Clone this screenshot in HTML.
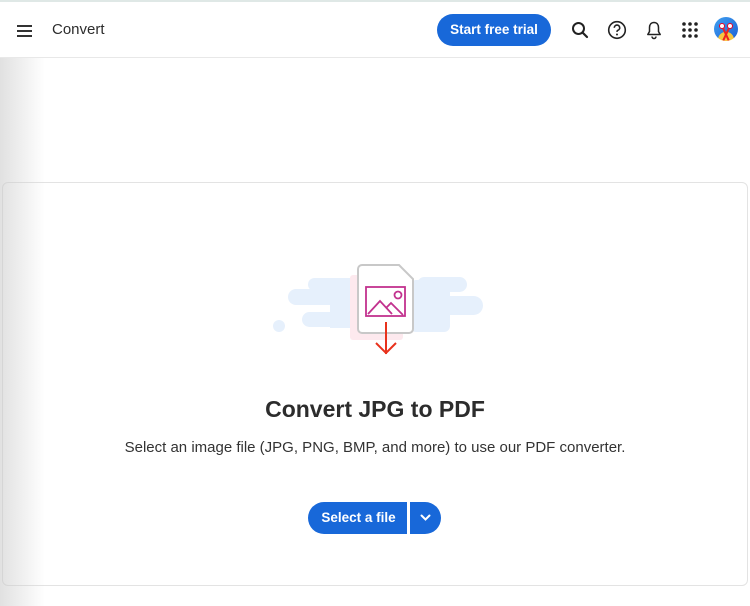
<!DOCTYPE html>
<html><head><meta charset="utf-8">
<style>
*{margin:0;padding:0;box-sizing:border-box}
body{width:750px;height:606px;overflow:hidden;background:#fff;font-family:"Liberation Sans",sans-serif;position:relative;color:#2c2c2c}
.shade{position:absolute;left:0;top:58px;width:45px;height:548px;background:linear-gradient(90deg,rgba(200,200,200,.55),rgba(255,255,255,0));z-index:5;pointer-events:none}
.top{position:absolute;left:0;top:0;width:750px;height:2px;background:#dfe8e6}
header{position:absolute;left:0;top:2px;width:750px;height:56px;border-bottom:1px solid #e8e8e8;background:#fff}
.ham{position:absolute;left:17px;top:23px;width:15px}
.ham i{display:block;height:2px;background:#333;margin-bottom:3px}
.title{position:absolute;left:52px;top:19px;font-size:15px;color:#2c2c2c}
.trial{position:absolute;left:437px;top:12px;width:114px;height:32px;border-radius:16px;background:#1868d9;color:#fff;font-weight:bold;font-size:13.5px;text-align:center;line-height:32px}
.card{position:absolute;left:2px;top:182px;width:746px;height:404px;border:1px solid #e3e3e3;border-radius:6px;background:#fff}
h1{position:absolute;left:0;width:750px;top:396px;text-align:center;font-size:23px;font-weight:bold;color:#2c2c2c}
p{position:absolute;left:0;width:750px;top:439px;text-align:center;font-size:15px;color:#333}
.btn{position:absolute;left:308px;top:502px;width:99px;height:32px;background:#1868d9;border-radius:16px 0 0 16px;color:#fff;font-weight:bold;font-size:13.5px;line-height:32px;text-align:center;padding-left:2px}
.dd{position:absolute;left:410px;top:502px;width:31px;height:32px;background:#1868d9;border-radius:0 16px 16px 0}
</style></head><body>
<div class="shade"></div><div class="top"></div>
<header>
<div class="ham"><i></i><i></i><i></i></div>
<div class="title">Convert</div>
<div class="trial">Start free trial</div>
<svg style="position:absolute;left:571px;top:19px" width="18" height="18" viewBox="0 0 18 18"><circle cx="7.5" cy="7.5" r="5.5" fill="none" stroke="#222" stroke-width="2"/><path d="M11.5 11.5L16 16" stroke="#222" stroke-width="2.2" stroke-linecap="round"/></svg>
<svg style="position:absolute;left:607px;top:18px" width="20" height="20" viewBox="0 0 20 20"><circle cx="10" cy="10" r="8.3" fill="none" stroke="#222" stroke-width="1.6"/><path d="M7.3 7.8a2.7 2.7 0 1 1 3.6 2.5c-.7.3-.9.8-.9 1.6" fill="none" stroke="#222" stroke-width="1.6"/><circle cx="10" cy="14.5" r="1" fill="#222"/></svg>
<svg style="position:absolute;left:645px;top:18px" width="18" height="20" viewBox="0 0 18 20"><path d="M9 2.5c-3 0-4.5 2.3-4.5 5v4L2.8 14.5h12.4L13.5 11.5v-4c0-2.7-1.5-5-4.5-5z" fill="none" stroke="#222" stroke-width="1.5" stroke-linejoin="round"/><path d="M7 16.5a2 2 0 0 0 4 0" fill="none" stroke="#222" stroke-width="1.5"/></svg>
<svg style="position:absolute;left:682px;top:20px" width="16" height="16" viewBox="0 0 16 16" fill="#222"><circle cx="2" cy="2" r="1.8"/><circle cx="8" cy="2" r="1.8"/><circle cx="14" cy="2" r="1.8"/><circle cx="2" cy="8" r="1.8"/><circle cx="8" cy="8" r="1.8"/><circle cx="14" cy="8" r="1.8"/><circle cx="2" cy="14" r="1.8"/><circle cx="8" cy="14" r="1.8"/><circle cx="14" cy="14" r="1.8"/></svg>
<div style="position:absolute;left:714px;top:15px;width:24px;height:24px;border-radius:50%;background:radial-gradient(circle at 50% 95%,#f7c640 30%,transparent 32%),linear-gradient(135deg,#3fa0f0,#1c5fd6);overflow:hidden">
<div style="position:absolute;left:5px;top:6px;width:6px;height:6px;border-radius:50%;background:#fff;border:1.5px solid #e02"></div>
<div style="position:absolute;left:13px;top:6px;width:6px;height:6px;border-radius:50%;background:#fff;border:1.5px solid #e02"></div>
<div style="position:absolute;left:11px;top:11px;width:2px;height:13px;background:#e22;transform:rotate(25deg)"></div>
<div style="position:absolute;left:11px;top:11px;width:2px;height:13px;background:#e22;transform:rotate(-25deg)"></div>
</div>
</header>
<div class="card"></div>
<svg style="position:absolute;left:260px;top:250px" width="240" height="110" viewBox="0 0 240 110">
<g fill="#e6f0fc">
<rect x="48" y="28" width="60" height="13" rx="6.5"/>
<rect x="28" y="39" width="80" height="16" rx="8"/>
<rect x="42" y="62" width="66" height="15" rx="7.5"/>
<rect x="70" y="38" width="38" height="40"/>
<rect x="13" y="70" width="12" height="12" rx="6"/>
<rect x="157" y="27" width="50" height="15" rx="7.5"/>
<rect x="170" y="46" width="53" height="19" rx="9.5"/>
<rect x="150" y="30" width="40" height="52" rx="6"/>
</g>
<rect x="90" y="25" width="53" height="65" rx="3" fill="#fde9ee"/>
<path d="M102 15h37l14 14v50a4 4 0 0 1-4 4H102a4 4 0 0 1-4-4V19a4 4 0 0 1 4-4z" fill="#fff" stroke="#c8c8c8" stroke-width="2"/>
<rect x="106" y="37" width="39" height="29" fill="none" stroke="#c2328e" stroke-width="1.8"/>
<circle cx="138" cy="45" r="3.5" fill="none" stroke="#c2328e" stroke-width="1.8"/>
<path d="M108 64l12-13 12 13M126 58l5-5 12 12" fill="none" stroke="#c2328e" stroke-width="1.8"/>
<path d="M126 72v32M116 93l10 10 10-10" fill="none" stroke="#e8321c" stroke-width="2"/>
</svg>
<h1>Convert JPG to PDF</h1>
<p>Select an image file (JPG, PNG, BMP, and more) to use our PDF converter.</p>
<div class="btn">Select a file</div>
<div class="dd"><svg style="position:absolute;left:10px;top:12px" width="11" height="8" viewBox="0 0 11 8"><path d="M1.5 1.5l4 4 4-4" fill="none" stroke="#fff" stroke-width="2" stroke-linecap="round"/></svg></div>
</body></html>
